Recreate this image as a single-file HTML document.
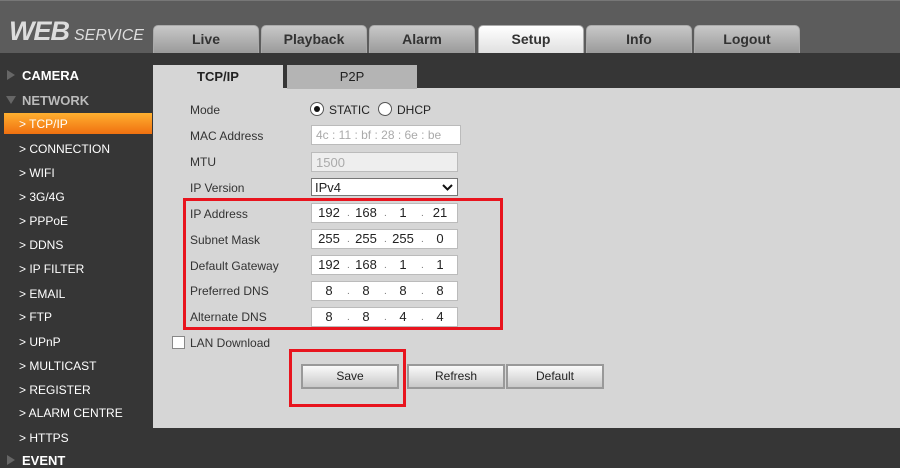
<!DOCTYPE html>
<html><head><style>
*{margin:0;padding:0;box-sizing:border-box}
body{width:900px;height:467px;overflow:hidden;background:#363636;font-family:"Liberation Sans",Arial,sans-serif;position:relative}
.a{position:absolute}
#hdr{left:0;top:0;width:900px;height:53px;background:#5c5c5c;border-top:1px solid #777}
.logo{left:9px;top:16px;color:#ddd;font-style:italic;font-weight:bold;font-size:27px;letter-spacing:-1px}
.logo span{font-size:16px;font-weight:normal;letter-spacing:0;margin-left:5px}
.tab{top:25px;height:28px;width:106px;border-radius:5px 5px 0 0;background:linear-gradient(#c8c8c8,#9a9a9a);border:1px solid #aaa;border-bottom:none;text-align:center;font-weight:bold;font-size:14px;line-height:27px;color:#333}
.tab.on{background:linear-gradient(#fff,#e0e0e0)}
.side{left:19px;color:#fff;font-size:12px}
.cat{left:22px;font-weight:bold;font-size:13px;color:#fff}
.tri{width:0;height:0;position:absolute}
#panel{left:153px;top:88px;width:747px;height:340px;background:#d6d6d6}
.st{top:65px;height:24px;width:130px;text-align:center;font-size:13px;line-height:24px;color:#222}
.lbl{left:190px;font-size:12px;color:#333}
.inp{left:311px;width:147px;height:20px;background:#fff;border:1px solid #bbb;font-size:13px;color:#222}
.inp i{position:absolute;font-style:normal;top:1px;width:30px;text-align:center}
.inp u{position:absolute;text-decoration:none;top:4px;font-size:10px;color:#777}
.btn{top:364px;height:25px;width:98px;border:2px solid #999;background:linear-gradient(#fafafa,#c8c8c8);text-align:center;font-size:12px;line-height:21px;color:#222}
.red{border:3px solid #e8141e}
</style></head><body>
<div id="hdr" class="a"></div>
<div class="a logo">WEB<span>SERVICE</span></div>
<div class="a tab" style="left:153px">Live</div>
<div class="a tab" style="left:261px">Playback</div>
<div class="a tab" style="left:369px">Alarm</div>
<div class="a tab on" style="left:478px">Setup</div>
<div class="a tab" style="left:586px">Info</div>
<div class="a tab" style="left:694px">Logout</div>

<div class="a tri" style="left:7px;top:70px;border-left:8px solid #666;border-top:5px solid transparent;border-bottom:5px solid transparent"></div>
<div class="a cat" style="top:68px">CAMERA</div>
<div class="a tri" style="left:6px;top:96px;border-top:8px solid #666;border-left:5px solid transparent;border-right:5px solid transparent"></div>
<div class="a cat" style="top:93px;color:#bbb">NETWORK</div>
<div class="a" style="left:4px;top:113px;width:148px;height:21px;background:linear-gradient(#ffb030,#f07010)"></div>
<div class="a side" style="top:117px">&gt; TCP/IP</div>
<div class="a side" style="top:142px">&gt; CONNECTION</div>
<div class="a side" style="top:166px">&gt; WIFI</div>
<div class="a side" style="top:190px">&gt; 3G/4G</div>
<div class="a side" style="top:214px">&gt; PPPoE</div>
<div class="a side" style="top:238px">&gt; DDNS</div>
<div class="a side" style="top:262px">&gt; IP FILTER</div>
<div class="a side" style="top:287px">&gt; EMAIL</div>
<div class="a side" style="top:310px">&gt; FTP</div>
<div class="a side" style="top:335px">&gt; UPnP</div>
<div class="a side" style="top:359px">&gt; MULTICAST</div>
<div class="a side" style="top:383px">&gt; REGISTER</div>
<div class="a side" style="top:406px">&gt; ALARM CENTRE</div>
<div class="a side" style="top:431px">&gt; HTTPS</div>
<div class="a tri" style="left:7px;top:455px;border-left:8px solid #666;border-top:5px solid transparent;border-bottom:5px solid transparent"></div>
<div class="a cat" style="top:453px">EVENT</div>

<div id="panel" class="a"></div>
<div class="a st" style="left:153px;background:#d6d6d6;font-weight:bold">TCP/IP</div>
<div class="a st" style="left:287px;background:#b4b4b4">P2P</div>

<div class="a lbl" style="top:103px">Mode</div>
<div class="a" style="left:310px;top:102px;width:14px;height:14px;border:1px solid #555;border-radius:50%;background:#fff"><div style="margin:3px;width:6px;height:6px;border-radius:50%;background:#111"></div></div>
<div class="a" style="left:329px;top:103px;font-size:12px;color:#222">STATIC</div>
<div class="a" style="left:378px;top:102px;width:14px;height:14px;border:1px solid #555;border-radius:50%;background:#fff"></div>
<div class="a" style="left:397px;top:103px;font-size:12px;color:#222">DHCP</div>

<div class="a lbl" style="top:129px">MAC Address</div>
<div class="a inp" style="top:125px;width:150px;color:#aaa;font-size:12px;padding:2px 0 0 4px;white-space:nowrap">4c : 11 : bf : 28 : 6e : be</div>
<div class="a lbl" style="top:155px">MTU</div>
<div class="a inp" style="top:152px;background:#eee;color:#aaa;padding:2px 0 0 4px">1500</div>
<div class="a lbl" style="top:181px">IP Version</div>
<div class="a inp" style="top:178px;height:18px;border-color:#777;padding:1px 0 0 3px">IPv4<svg style="position:absolute;right:4px;top:5px" width="11" height="7"><path d="M1 1L5.5 5.5L10 1" stroke="#111" stroke-width="2" fill="none"/></svg></div>

<div class="a lbl" style="top:207px">IP Address</div>
<div class="a lbl" style="top:233px">Subnet Mask</div>
<div class="a lbl" style="top:259px">Default Gateway</div>
<div class="a lbl" style="top:284px">Preferred DNS</div>
<div class="a lbl" style="top:310px">Alternate DNS</div>

<div class="a inp" style="top:203px"><i style="left:2px">192</i><u style="left:35px">.</u><i style="left:39px">168</i><u style="left:72px">.</u><i style="left:76px">1</i><u style="left:109px">.</u><i style="left:113px">21</i></div>
<div class="a inp" style="top:229px"><i style="left:2px">255</i><u style="left:35px">.</u><i style="left:39px">255</i><u style="left:72px">.</u><i style="left:76px">255</i><u style="left:109px">.</u><i style="left:113px">0</i></div>
<div class="a inp" style="top:255px"><i style="left:2px">192</i><u style="left:35px">.</u><i style="left:39px">168</i><u style="left:72px">.</u><i style="left:76px">1</i><u style="left:109px">.</u><i style="left:113px">1</i></div>
<div class="a inp" style="top:281px"><i style="left:2px">8</i><u style="left:35px">.</u><i style="left:39px">8</i><u style="left:72px">.</u><i style="left:76px">8</i><u style="left:109px">.</u><i style="left:113px">8</i></div>
<div class="a inp" style="top:307px"><i style="left:2px">8</i><u style="left:35px">.</u><i style="left:39px">8</i><u style="left:72px">.</u><i style="left:76px">4</i><u style="left:109px">.</u><i style="left:113px">4</i></div>
<div class="a red" style="left:183px;top:198px;width:320px;height:132px"></div>

<div class="a" style="left:172px;top:336px;width:13px;height:13px;border:1px solid #888;background:#fff"></div>
<div class="a" style="left:190px;top:336px;font-size:12px;color:#333">LAN Download</div>

<div class="a btn" style="left:301px">Save</div>
<div class="a btn" style="left:407px">Refresh</div>
<div class="a btn" style="left:506px">Default</div>
<div class="a red" style="left:289px;top:349px;width:117px;height:58px"></div>
</body></html>
